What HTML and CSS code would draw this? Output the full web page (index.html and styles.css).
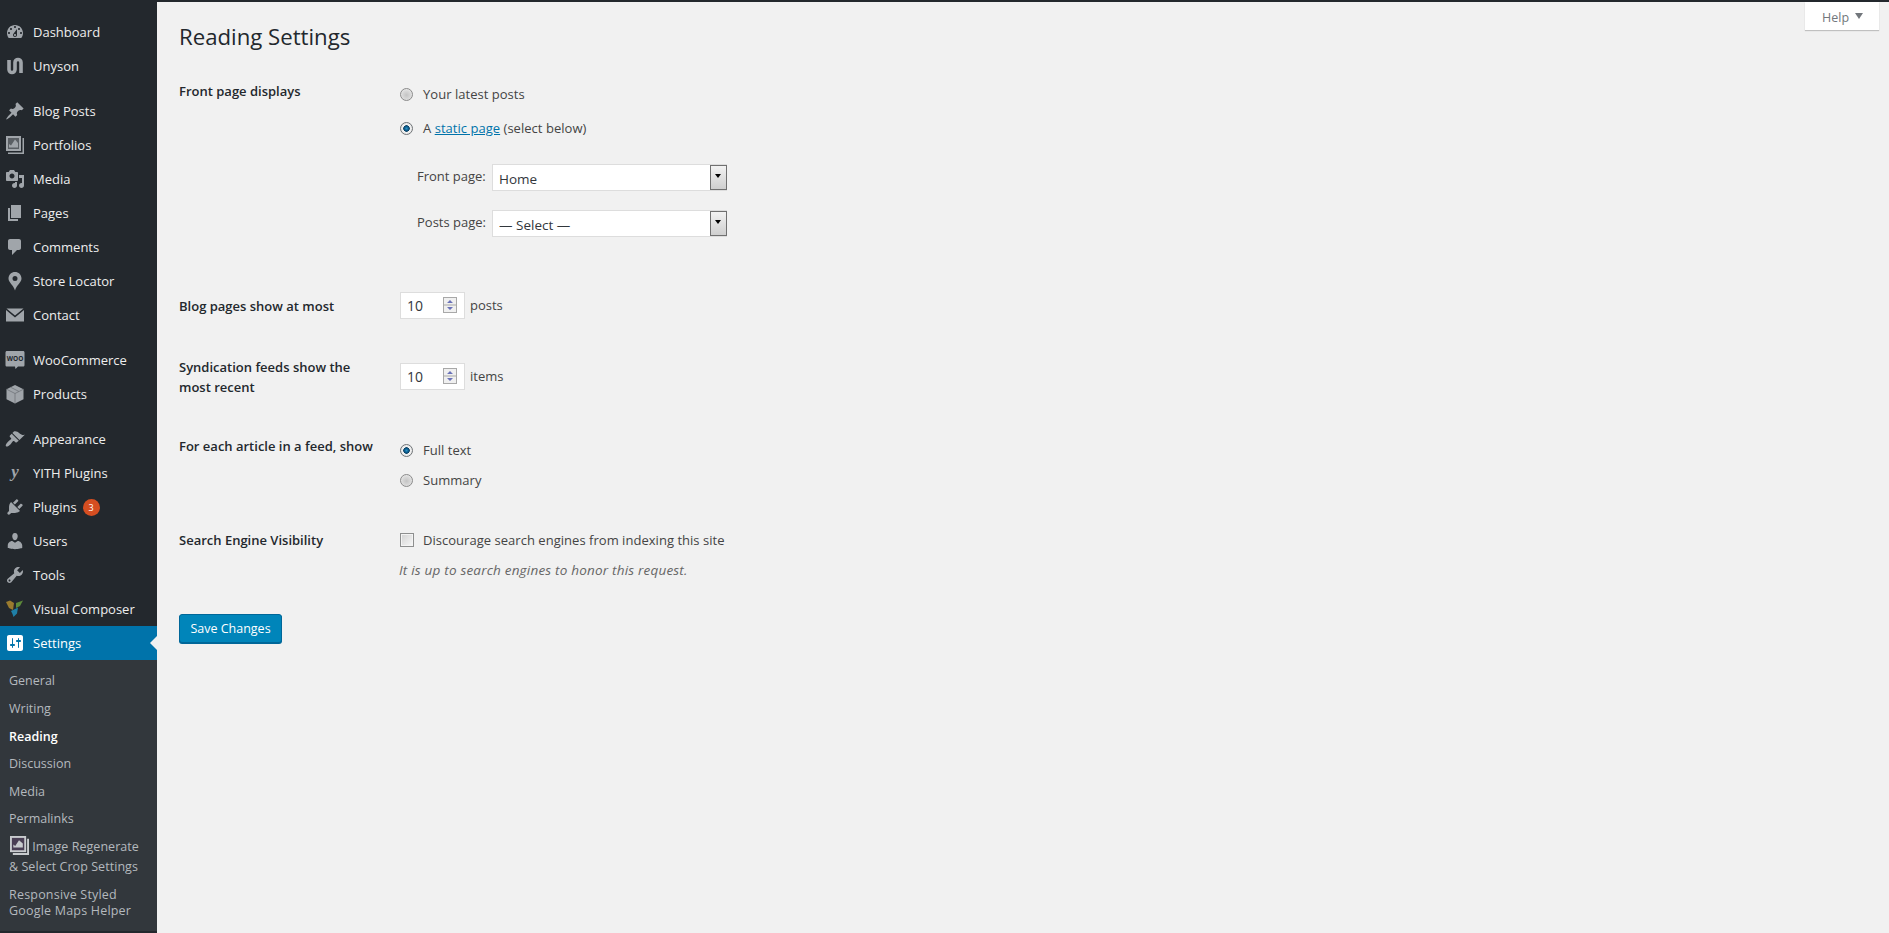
FILE: index.html
```html
<!DOCTYPE html>
<html lang="en">
<head>
<meta charset="utf-8">
<title>Reading Settings</title>
<link rel="stylesheet" href="styles.css">
</head>
<body>
<div class="layout">
<nav class="sidebar">
  <ul class="menu">
    <li class="item"><svg class="ico" viewBox="0 0 20 20"><path fill-rule="evenodd" d="M3.76 16h12.48c1.1-1.37 1.76-3.11 1.76-5 0-4.42-3.58-8-8-8s-8 3.58-8 8c0 1.89.66 3.63 1.76 5zM10 4c.55 0 1 .45 1 1s-.45 1-1 1-1-.45-1-1 .45-1 1-1zM6 6c.55 0 1 .45 1 1s-.45 1-1 1-1-.45-1-1 .45-1 1-1zm8 0c.55 0 1 .45 1 1s-.45 1-1 1-1-.45-1-1 .45-1 1-1zm-5.37 5.55L12 7v6c0 1.1-.9 2-2 2s-2-.9-2-2c0-.57.24-1.08.63-1.45zM4 10c.55 0 1 .45 1 1s-.45 1-1 1-1-.45-1-1 .45-1 1-1zm12 0c.55 0 1 .45 1 1s-.45 1-1 1-1-.45-1-1 .45-1 1-1zm-5 3c0-.55-.45-1-1-1s-1 .45-1 1 .45 1 1 1 1-.45 1-1z"/></svg><span>Dashboard</span></li>
    <li class="item"><svg class="ico" viewBox="0 0 20 20"><path class="uny" d="M4 4v9.500a3 3 0 0 0 6 0v-7a3 3 0 0 1 6 0V17"/></svg><span>Unyson</span></li>
    <li class="item sep"><svg class="ico" viewBox="0 0 20 20"><path d="M10.44 3.02l1.82-1.82 6.36 6.35-1.830 1.820c-1.050-.68-2.480-.57-3.410.36l-.75.75c-.92.93-1.040 2.350-.35 3.410l-1.830 1.820-2.410-2.410-2.800 2.790c-.42.42-3.380 2.710-3.800 2.290s1.860-3.390 2.280-3.810l2.790-2.790L4.100 9.360l1.830-1.820c1.050.69 2.480.57 3.400-.36l.75-.75c.93-.92 1.050-2.350.36-3.410z"/></svg><span>Blog Posts</span></li>
    <li class="item"><svg class="ico" viewBox="0 0 20 20"><path d="M1 1h15v15H1z"/><rect class="ico-hole" x="3" y="3" width="11" height="11"/><path d="M4 12.500V9l2 1.500L10 4.500l3 3.500v4.500zM17.500 3H19v16H3v-1.500h14.500z"/></svg><span>Portfolios</span></li>
    <li class="item"><svg class="ico" viewBox="0 0 20 20"><path fill-rule="evenodd" d="M13 11V4c0-.55-.45-1-1-1h-1.670L9 1H5L3.670 3H2c-.55 0-1 .45-1 1v7c0 .55.45 1 1 1h10c.55 0 1-.45 1-1zM7 4.500c1.380 0 2.500 1.120 2.500 2.500S8.380 9.500 7 9.500 4.500 8.380 4.500 7 5.620 4.500 7 4.500zM14 6h5v10.500c0 1.380-1.120 2.500-2.500 2.500S14 17.880 14 16.500s1.120-2.500 2.500-2.500c.17 0 .34.02.5.05V9h-3V6zm-4 8.050V13h2v3.500c0 1.380-1.120 2.500-2.500 2.500S7 17.880 7 16.500 8.120 14 9.500 14c.17 0 .34.02.5.05z"/></svg><span>Media</span></li>
    <li class="item"><svg class="ico" viewBox="0 0 20 20"><path d="M6 15V2h10v13H6zm-1 1h8v2H3V5h2v11z"/></svg><span>Pages</span></li>
    <li class="item"><svg class="ico" viewBox="0 0 20 20"><path d="M5 2h9c1.100 0 2 .9 2 2v7c0 1.100-.9 2-2 2h-2l-5 5v-5H5c-1.100 0-2-.9-2-2V4c0-1.100.9-2 2-2z"/></svg><span>Comments</span></li>
    <li class="item"><svg class="ico" viewBox="0 0 20 20"><path fill-rule="evenodd" d="M10 1c3.500 0 6.500 2.700 6.500 6.500 0 4-4.800 6.500-6.500 12-1.700-5.500-6.500-8-6.500-12C3.500 3.700 6.500 1 10 1zm0 4a2.500 2.500 0 1 0 0 5 2.500 2.500 0 0 0 0-5z"/></svg><span>Store Locator</span></li>
    <li class="item"><svg class="ico" viewBox="0 0 20 20"><path d="M1.500 3.500h17L10 10.500zM1 5l9 7.500L19 5v11.500H1z"/></svg><span>Contact</span></li>
    <li class="item sep"><svg class="ico woo" viewBox="0 0 20 20"><path d="M2 1h16c1 0 1.500.6 1.500 1.500V15c0 1-.6 1.500-1.500 1.500h-5L10.500 19l-.5-2.500H2C1 16.500.5 16 .5 15V2.500C.5 1.600 1 1 2 1z"/><text x="10" y="11" class="woo-text">WOO</text></svg><span>WooCommerce</span></li>
    <li class="item"><svg class="ico" viewBox="0 0 20 20"><path d="M10 1l8.500 4.200v10L10 19.500l-8.500-4.300v-10z"/><path class="box-line" d="M1.500 5.200L10 9.500l8.500-4.300M10 9.500v10M5.500 3.200L14 7.500"/></svg><span>Products</span></li>
    <li class="item sep"><svg class="ico" viewBox="0 0 20 20"><path d="M14.480 11.060L7.410 3.990l1.500-1.500c.5-.56 2.300-.47 3.510.32 1.210.8 1.430 1.280 2.910 2.100 1.180.64 2.450 1.260 4.450.85zM13.770 11.770L6.700 4.700 4.930 6.470c-.39.39-.39 1.020 0 1.410l1.060 1.060c.39.39.39 1.030 0 1.420-.6.6-1.430 1.110-2.210 1.690-.35.26-.7.53-1.010.84-1.600 1.600-2.600 3.600-1.800 4.400s2.800-.2 4.400-1.800c.31-.31.58-.66.84-1.010.58-.78 1.090-1.610 1.690-2.210.39-.39 1.030-.39 1.420 0l1.060 1.060c.39.39 1.020.39 1.410 0z"/></svg><span>Appearance</span></li>
    <li class="item"><svg class="ico" viewBox="0 0 20 20"><text x="10" y="14" class="yith-text">y</text></svg><span>YITH Plugins</span></li>
    <li class="item"><svg class="ico" viewBox="0 0 20 20"><path d="M13.110 4.360L9.870 7.600 8 5.730l3.240-3.240c.35-.34 1.050-.2 1.560.32.52.51.66 1.210.31 1.550zm-8 1.770l.91-1.120 9.010 9.010-1.190.84c-.71.71-2.630 1.160-3.820 1.160H6.140L4.900 17.260c-.59.59-1.540.59-2.120 0-.59-.58-.59-1.530 0-2.120l1.240-1.240v-3.880c0-1.130.4-3.190 1.090-3.890zm7.260 3.970l3.240-3.240c.34-.35 1.040-.21 1.550.31.52.51.66 1.210.31 1.550l-3.240 3.250z"/></svg><span>Plugins</span><b class="badge">3</b></li>
    <li class="item"><svg class="ico" viewBox="0 0 20 20"><path d="M10 9.250c-2.270 0-2.730-3.440-2.730-3.440C7 4.020 7.820 2 9.970 2c2.160 0 2.980 2.020 2.710 3.810 0 0-.41 3.440-2.680 3.440zm0 2.570L12.720 10c2.390 0 4.520 2.330 4.520 4.530v2.490s-3.650 1.130-7.240 1.130c-3.650 0-7.240-1.130-7.240-1.130v-2.490c0-2.250 1.940-4.480 4.470-4.480z"/></svg><span>Users</span></li>
    <li class="item"><svg class="ico" viewBox="0 0 20 20"><path fill-rule="evenodd" d="M16.680 9.770c-1.340 1.340-3.300 1.670-4.950.99l-5.410 6.520c-.99.99-2.590.99-3.580 0s-.99-2.590 0-3.570l6.520-5.420c-.68-1.650-.35-3.610.99-4.950 1.280-1.280 3.120-1.620 4.720-1.060l-2.890 2.890 2.820 2.820 2.860-2.870c.53 1.580.18 3.390-1.080 4.650zM3.810 16.210c.4.39 1.040.39 1.430 0 .4-.4.4-1.040 0-1.430-.39-.4-1.030-.4-1.430 0-.39.39-.39 1.030 0 1.430z"/></svg><span>Tools</span></li>
    <li class="item"><svg class="ico" viewBox="0 0 20 20"><path class="vc-gold" d="M1 3l4-1.500L9 4l-1 7-4-2z"/><path class="vc-green" d="M11 4l7-2.500-3 5.500-4 2z"/><path class="vc-blue" d="M6 12l7-3.500-1 6-3.500 3.500-1-3z"/></svg><span>Visual Composer</span></li>
    <li class="item current"><svg class="ico" viewBox="0 0 20 20"><path fill-rule="evenodd" d="M18 16V4c0-1.100-.9-2-2-2H4c-1.100 0-2 .9-2 2v12c0 1.100.9 2 2 2h12c1.100 0 2-.9 2-2zM8 11h1c.55 0 1 .45 1 1s-.45 1-1 1H8v1.500c0 .28-.22.5-.5.5s-.5-.22-.5-.5V13H6c-.55 0-1-.45-1-1s.45-1 1-1h1V5.500c0-.28.22-.5.5-.5s.5.22.5.5V11zm5-2h-1c-.55 0-1-.45-1-1s.45-1 1-1h1V5.500c0-.28.22-.5.5-.5s.5.22.5.5V7h1c.55 0 1 .45 1 1s-.45 1-1 1h-1v5.500c0 .28-.22.5-.5.5s-.5-.22-.5-.5V9z"/></svg><span>Settings</span></li>
  </ul>
  <ul class="submenu">
    <li class="sub s-general">General</li>
    <li class="sub s-writing">Writing</li>
    <li class="sub s-reading active">Reading</li>
    <li class="sub s-discussion">Discussion</li>
    <li class="sub s-media">Media</li>
    <li class="sub s-permalinks">Permalinks</li>
    <li class="sub s-regen"><svg class="sub-ico" viewBox="0 0 20 20"><path class="sub-ico-frame" d="M0 0h17v17H0z"/><rect class="sub-ico-fill" x="2" y="2" width="13" height="13"/><path class="sub-ico-frame" d="M3.500 12V9l2 1.500L9.500 4.500l4 3.500v4zM18 3h2v17H3v-2h15z"/></svg> Image Regenerate<br>&amp; Select Crop Settings</li>
    <li class="sub s-maps">Responsive Styled<br>Google Maps Helper</li>
  </ul>
</nav>
<main class="content">
  <h1 class="title">Reading Settings</h1>
  <form class="form">
    <section class="row row-front">
      <div class="label">Front page displays</div>
      <div class="field">
        <label class="opt opt-a"><input class="radio" type="radio" name="front"><span>Your latest posts</span></label>
        <label class="opt opt-b"><input class="radio" type="radio" name="front" checked><span>A <a class="link" href="#">static page</a> (select below)</span></label>
        <div class="pick pick-1"><span class="pick-label">Front page:</span><span class="select"><select><option>Home</option></select><i class="arrow"></i></span></div>
        <div class="pick pick-2"><span class="pick-label">Posts page:</span><span class="select"><select><option>— Select —</option></select><i class="arrow"></i></span></div>
      </div>
    </section>
    <section class="row row-blog">
      <div class="label">Blog pages show at most</div>
      <div class="field inline">
        <span class="num"><input type="text" value="10"><svg class="spin" viewBox="0 0 14 16"><path class="spin-bg" d="M0 0h14v16H0z"/><path class="spin-line" d="M0 .5h14M0 8h14M0 15.500h14M.5 0v16M13.500 0v16"/><path class="spin-arrow" d="M7 3l3 3H4zM7 13l-3-3h6z"/></svg></span><span class="unit">posts</span>
      </div>
    </section>
    <section class="row row-feed">
      <div class="label label-two">Syndication feeds show the most recent</div>
      <div class="field inline">
        <span class="num"><input type="text" value="10"><svg class="spin" viewBox="0 0 14 16"><path class="spin-bg" d="M0 0h14v16H0z"/><path class="spin-line" d="M0 .5h14M0 8h14M0 15.500h14M.5 0v16M13.500 0v16"/><path class="spin-arrow" d="M7 3l3 3H4zM7 13l-3-3h6z"/></svg></span><span class="unit">items</span>
      </div>
    </section>
    <section class="row row-article">
      <div class="label">For each article in a feed, show</div>
      <div class="field">
        <label class="opt opt-c"><input class="radio" type="radio" name="feed" checked><span>Full text</span></label>
        <label class="opt opt-d"><input class="radio" type="radio" name="feed"><span>Summary</span></label>
      </div>
    </section>
    <section class="row row-search">
      <div class="label">Search Engine Visibility</div>
      <div class="field">
        <label class="opt opt-e"><input class="check" type="checkbox"><span>Discourage search engines from indexing this site</span></label>
        <p class="hint">It is up to search engines to honor this request.</p>
      </div>
    </section>
    <button class="save" type="button">Save Changes</button>
  </form>
  <div class="help">Help<i class="help-arrow"></i></div>
</main>
</div>
</body>
</html>
```
FILE: styles.css
```css
* { box-sizing: border-box; }
html, body { margin: 0; height: 100%; }
body {
  background: #f1f1f1;
  color: #32373c;
  font-family: "Open Sans", "Noto Sans", sans-serif;
  font-size: 13px;
  overflow: hidden;
}
ul { list-style: none; margin: 0; padding: 0; }
.layout { display: flex; height: 933px; padding-top: 2px; background: #23282d; }
.sidebar { width: 157px; flex: none; background: #23282d; padding-top: 13px; height: 931px; }
.item {
  display: flex;
  align-items: center;
  height: 34px;
  padding-left: 5px;
  color: #eee;
  font-size: 13px;
  position: relative;
}
.item.sep { margin-top: 11px; }
.ico { width: 20px; height: 20px; flex: none; margin-right: 8px; fill: #a0a5aa; }
.ico-hole { fill: #5a5f64; }
.uny { fill: none; stroke: #a0a5aa; stroke-width: 3.600; }
.box-line { fill: none; stroke: #6a6f74; stroke-width: .7; }
.woo { fill: #a0a5aa; }
.woo-text { fill: #23282d; font: 700 6.500px "Open Sans", sans-serif; text-anchor: middle; }
.yith-text { fill: #a0a5aa; font: italic 700 17px "Liberation Serif", serif; text-anchor: middle; }
.vc-gold { fill: #9a7b2e; }
.vc-green { fill: #5d8a3a; }
.vc-blue { fill: #1f7fa6; }
.badge {
  width: 17px;
  height: 17px;
  margin-left: 6px;
  border-radius: 50%;
  background: #d54e21;
  color: #fff;
  font-size: 9px;
  font-weight: 400;
  line-height: 17px;
  text-align: center;
}
.current { background: #0073aa; color: #fff; }
.current .ico { fill: #fff; }
.current::after {
  content: "";
  position: absolute;
  right: 0;
  top: 10px;
  border: 7px solid transparent;
  border-right-color: #f1f1f1;
  border-left-width: 0;
}
.submenu { background: #32373c; height: 271px; padding-top: 9px; }
.sub { color: #b4b9be; font-size: 12.500px; padding-left: 9px; }
.active { color: #fff; font-weight: 600; }
.s-general { height: 28px; line-height: 24px; }
.s-writing { height: 28px; line-height: 24px; }
.s-reading { height: 27px; line-height: 24px; }
.s-discussion { height: 28px; line-height: 24px; }
.s-media { height: 27px; line-height: 24px; }
.s-permalinks { height: 28px; line-height: 24px; }
.s-regen { height: 52px; line-height: 20px; padding-top: 1px; letter-spacing: .05px; }
.s-maps { line-height: 16px; letter-spacing: .2px; }
.sub-ico { width: 19px; height: 19px; vertical-align: -4px; margin-left: 1px; }
.sub-ico-frame { fill: #c8cbce; }
.sub-ico-fill { fill: #4a3f55; }
.content { flex: 1; background: #f1f1f1; padding: 0 10px 0 22px; position: relative; min-width: 0; }
.title { margin: 0; padding-top: 20px; font-size: 22.200px; font-weight: 400; line-height: 29px; color: #23282d; }
.row { display: flex; }
.label { width: 221px; flex: none; font-weight: 600; color: #23282d; line-height: 20px; }
.label-two { width: 200px; margin-right: 21px; }
.field { flex: 1; min-width: 0; }
.field.inline { display: flex; align-items: center; height: 26px; }
.row-front { height: 241px; padding-top: 30px; }
.row-blog { height: 65px; }
.row-blog .label { padding-top: 4px; }
.row-feed { height: 79px; }
.row-feed .field { margin-top: 6px; }
.row-article { height: 93px; }
.row-article .field { padding-top: 4px; }
.row-search { height: 85px; }
.row-search .label { padding-top: 1px; }
.opt { display: flex; align-items: center; color: #444; height: 20px; letter-spacing: .03px; }
.opt-a { margin-top: 3px; }
.opt-b { margin-top: 14px; }
.opt-d { margin-top: 10px; }
.opt-e { margin-top: 1px; }
.radio, .check {
  appearance: none;
  margin: 0 10px 0 0;
  flex: none;
}
.radio {
  width: 13px;
  height: 13px;
  border-radius: 50%;
  border: 1px solid #8a8a8a;
  background: radial-gradient(circle at 50% 55%, #c4c4c4 0, #d8d8d8 50%, #f6f6f6 100%);
}
.radio:checked {
  background: radial-gradient(circle at 50% 50%, #2a93c4 0, #0b5c8f 25%, #0a3f60 38%, #f2f2f2 46%, #dcdcdc 100%);
  border-color: #6f7376;
}
.check {
  width: 14px;
  height: 14px;
  margin-right: 9px;
  border: 1px solid #8e8f8f;
  background: linear-gradient(135deg, #d2d2d2, #f8f8f8);
  box-shadow: inset 0 0 0 1px #f4f4f4;
}
.link { color: #0073aa; text-decoration: underline; }
.pick { display: flex; align-items: center; height: 27px; padding-left: 17px; color: #444; }
.pick-1 { margin-top: 26px; }
.pick-2 { margin-top: 19px; }
.pick-label { width: 75px; flex: none; margin-top: -3px; }
.select { position: relative; display: block; width: 235px; height: 27px; }
.select select {
  appearance: none;
  width: 100%;
  height: 100%;
  border: 1px solid #ddd;
  background: #fff;
  color: #32373c;
  font: 13.500px "Open Sans", sans-serif;
  padding: 2px 6px 0;
  border-radius: 0;
}
.arrow {
  position: absolute;
  right: 0;
  top: 1px;
  width: 17px;
  height: 25px;
  border: 1px solid #707070;
  background: linear-gradient(#f2f2f2, #cfcfcf);
}
.arrow::after {
  content: "";
  position: absolute;
  left: 4px;
  top: 8px;
  border: 3.500px solid transparent;
  border-top: 4px solid #000;
  border-bottom: 0;
}
.num { display: flex; align-items: center; width: 65px; height: 27px; border: 1px solid #ddd; background: #fff; }
.num input { width: 42px; flex: none; border: 0; background: none; padding: 0 0 0 6px; font: 14px "Open Sans", sans-serif; color: #32373c; }
.spin { width: 14px; height: 16px; flex: none; }
.spin-bg { fill: #f0f0f0; }
.spin-line { stroke: #a8a8a8; stroke-width: 1; fill: none; }
.spin-arrow { fill: #6a72b8; }
.unit { margin-left: 5px; color: #444; }
.hint { margin: 11px 0 0 -1px; color: #666; font-style: italic; font-size: 13.500px; line-height: 18px; letter-spacing: .2px; }
.save {
  display: block;
  width: 103px;
  height: 29px;
  padding: 0;
  border: 1px solid #006799;
  border-radius: 3px;
  background: #0085ba;
  box-shadow: 0 1px 0 #006799;
  color: #fff;
  font: 12.500px "Open Sans", sans-serif;
}
.help {
  position: absolute;
  top: 0;
  right: 10px;
  width: 74px;
  height: 28px;
  padding-left: 17px;
  background: #fff;
  box-shadow: 0 1px 1px rgba(0,0,0,.2);
  color: #72777c;
  font-size: 12.500px;
  line-height: 32px;
}
.help-arrow {
  position: absolute;
  left: 50px;
  top: 11px;
  border: 4px solid transparent;
  border-top: 6px solid #72777c;
  border-bottom: 0;
}
```
